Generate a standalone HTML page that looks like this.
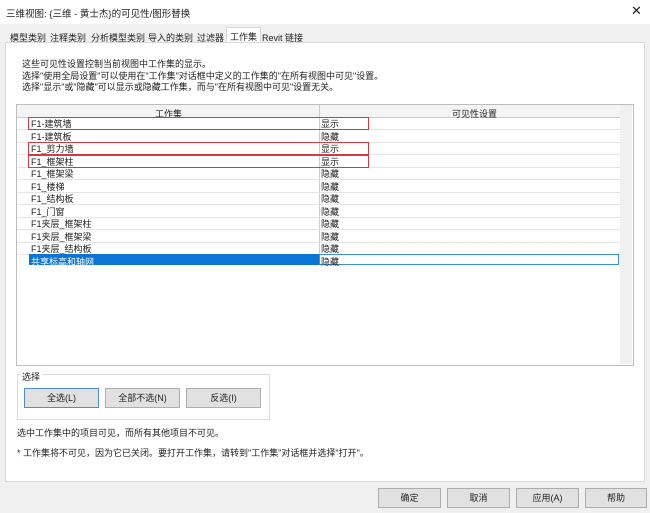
<html><head><style>
body{margin:0;width:650px;height:513px;background:#f0f0f0;font-family:"Liberation Sans","Noto Sans CJK SC",sans-serif;font-size:9px;color:#222;position:relative;overflow:hidden}
.a{position:absolute}
.t{white-space:nowrap}
.btn{position:absolute;background:#e1e1e1;border:1px solid #adadad;text-align:center;box-sizing:border-box;font-size:9px}
.row{position:absolute;left:18px;width:602px;height:12px;line-height:13px;border-bottom:1px solid #e4e4e4}
.row span{position:absolute;top:1px}
.red{position:absolute;border:1.5px solid #d8383f;box-sizing:border-box}
</style></head><body>
<div class="a" style="left:0;top:0;width:650px;height:24px;background:#fff"></div>
<div class="a t" style="left:6px;top:6px;font-size:9.5px">三维视图: {三维 - 黄士杰}的可见性/图形替换</div>
<div class="a t" style="left:631px;top:3px;font-size:13px">✕</div>
<div class="a" style="left:226px;top:27px;width:33px;height:16px;background:#fff;border:1px solid #d9d9d9;border-bottom:none"></div>
<div class="a t" style="left:10px;top:31px">模型类别</div>
<div class="a t" style="left:50px;top:31px">注释类别</div>
<div class="a t" style="left:91px;top:31px">分析模型类别</div>
<div class="a t" style="left:148px;top:31px">导入的类别</div>
<div class="a t" style="left:197px;top:31px">过滤器</div>
<div class="a t" style="left:230px;top:30px">工作集</div>
<div class="a t" style="left:262px;top:31px">Revit 链接</div>
<div class="a" style="left:5px;top:42px;width:638px;height:438px;background:#fff;border:1px solid #d9d9d9"></div>
<div class="a t" style="left:22px;top:59px;line-height:11.5px">这些可见性设置控制当前视图中工作集的显示。<br>选择"使用全局设置"可以使用在"工作集"对话框中定义的工作集的"在所有视图中可见"设置。<br>选择"显示"或"隐藏"可以显示或隐藏工作集，而与"在所有视图中可见"设置无关。</div>
<div class="a" style="left:16px;top:104px;width:616px;height:260px;border:1px solid #bdbdbd;background:#fff"></div>
<div class="a" style="left:620px;top:105px;width:12px;height:259px;background:#f0f0f0"></div>
<div class="a" style="left:17px;top:105px;width:603px;height:12px;background:#f4f4f4;border-bottom:1px solid #ccc"></div>
<div class="a" style="left:319px;top:105px;width:1px;height:160px;background:#ccc"></div>
<div class="a t" style="left:155px;top:107px">工作集</div>
<div class="a t" style="left:452px;top:107px">可见性设置</div>
<div class="row" style="top:117px"><span style="left:13px">F1-建筑墙</span><span style="left:303px">显示</span></div>
<div class="row" style="top:130px"><span style="left:13px">F1-建筑板</span><span style="left:303px">隐藏</span></div>
<div class="row" style="top:142px"><span style="left:13px">F1_剪力墙</span><span style="left:303px">显示</span></div>
<div class="row" style="top:155px"><span style="left:13px">F1_框架柱</span><span style="left:303px">显示</span></div>
<div class="row" style="top:167px"><span style="left:13px">F1_框架梁</span><span style="left:303px">隐藏</span></div>
<div class="row" style="top:180px"><span style="left:13px">F1_楼梯</span><span style="left:303px">隐藏</span></div>
<div class="row" style="top:192px"><span style="left:13px">F1_结构板</span><span style="left:303px">隐藏</span></div>
<div class="row" style="top:205px"><span style="left:13px">F1_门窗</span><span style="left:303px">隐藏</span></div>
<div class="row" style="top:217px"><span style="left:13px">F1夹层_框架柱</span><span style="left:303px">隐藏</span></div>
<div class="row" style="top:230px"><span style="left:13px">F1夹层_框架梁</span><span style="left:303px">隐藏</span></div>
<div class="row" style="top:242px"><span style="left:13px">F1夹层_结构板</span><span style="left:303px">隐藏</span></div>
<div class="a" style="left:29px;top:254px;width:290px;height:11px;background:#0c74d4"></div>
<div class="a" style="left:319px;top:254px;width:300px;height:11px;border:1px solid #3b8fd6;box-sizing:border-box"></div>
<div class="a t" style="left:31px;top:255px;color:#fff">共享标高和轴网</div>
<div class="a t" style="left:321px;top:255px">隐藏</div>
<div class="red" style="left:28px;top:117px;width:341px;height:13px"></div>
<div class="red" style="left:28px;top:142px;width:341px;height:13px"></div>
<div class="red" style="left:28px;top:155px;width:341px;height:13px"></div>
<div class="a" style="left:17px;top:374px;width:251px;height:44px;border:1px solid #ddd"></div>
<div class="a t" style="left:20px;top:370px;background:#fff;padding:0 2px">选择</div>
<div class="btn" style="left:24px;top:388px;width:75px;height:20px;line-height:18px;border-color:#4a8ed0">全选(L)</div>
<div class="btn" style="left:105px;top:388px;width:75px;height:20px;line-height:18px">全部不选(N)</div>
<div class="btn" style="left:186px;top:388px;width:75px;height:20px;line-height:18px">反选(I)</div>
<div class="a t" style="left:17px;top:426px">选中工作集中的项目可见，而所有其他项目不可见。</div>
<div class="a t" style="left:17px;top:446px">* 工作集将不可见，因为它已关闭。要打开工作集，请转到"工作集"对话框并选择"打开"。</div>
<div class="btn" style="left:378px;top:488px;width:63px;height:20px;line-height:18px">确定</div>
<div class="btn" style="left:447px;top:488px;width:63px;height:20px;line-height:18px">取消</div>
<div class="btn" style="left:516px;top:488px;width:63px;height:20px;line-height:18px">应用(A)</div>
<div class="btn" style="left:585px;top:488px;width:62px;height:20px;line-height:18px">帮助</div>
</body></html>
